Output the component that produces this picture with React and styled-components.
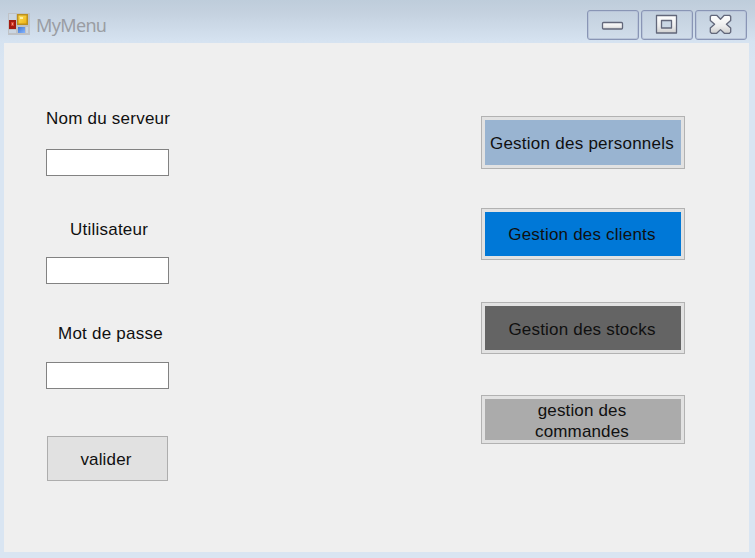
import React from "react";
import styled, { createGlobalStyle } from "styled-components";

const GlobalStyle = createGlobalStyle`
  * { box-sizing: border-box; }
  body { margin: 0; overflow: hidden; }
`;

const Window = styled.div`
  display: flex;
  flex-direction: column;
  width: 755px;
  height: 558px;
  padding: 0 6px 6px 4px;
  background: linear-gradient(#becddb 0, #c4d1df 12px, #d6e3f1 42px, #d9e5f2 60px);
  font-family: "Liberation Sans", Arial, sans-serif;
  color: #101010;
`;

const TitleBar = styled.header`
  display: flex;
  height: 43px;
  padding: 10px 2px 0 4px;
`;

const AppIcon = styled.svg`
  width: 22px;
  height: 22px;
  margin-top: 3px;
`;

const Title = styled.h1`
  flex: 1;
  margin: 3px 0 0 6px;
  font: 400 18px/25px "Noto Sans", "Open Sans", sans-serif;
  letter-spacing: -0.65px;
  color: #9a9da3;
`;

const Controls = styled.div`
  display: flex;
  gap: 2px;
`;

const ControlButton = styled.button`
  width: 52px;
  height: 30px;
  padding: 0;
  border: 1px solid #8995b5;
  border-radius: 3px;
  background: linear-gradient(#c3d0de, #d1ddea);
  box-shadow: inset 0 0 0 1px #b9c5d9;

  svg { display: block; width: 50px; height: 28px; }
`;

const Client = styled.main`
  display: flex;
  justify-content: space-between;
  flex: 1;
  width: 745px;
  padding: 0 64px 0 42px;
  background: #efefef;
`;

const Form = styled.form`
  display: flex;
  flex-direction: column;
  width: 123px;
  padding-top: 64px;
`;

const Field = styled.label`
  display: flex;
  flex-direction: column;
  height: ${(p) => p.$height}px;
`;

const Caption = styled.span`
  height: ${(p) => p.$height}px;
  padding-left: ${(p) => p.$indent}px;
  font-size: 17px;
  line-height: 24px;
  letter-spacing: 0.23px;
  white-space: nowrap;
`;

const TextInput = styled.input`
  width: 123px;
  height: 27px;
  padding: 2px 4px;
  border: 1px solid #828282;
  border-radius: 0;
  background: #fff;
  font: inherit;
  outline: none;
`;

const SubmitButton = styled.button`
  width: 121px;
  height: 45px;
  margin: 0 1px;
  padding: 2px 3px 0 0;
  border: 1px solid #adadad;
  background: #e1e1e1;
  color: inherit;
  font: 17px/21px "Liberation Sans", Arial, sans-serif;
  letter-spacing: 0.15px;
`;

const Menu = styled.nav`
  display: flex;
  flex-direction: column;
  width: 204px;
  padding-top: 73px;
`;

const MenuButton = styled.button`
  flex: none;
  height: ${(p) => p.$height}px;
  margin-bottom: ${(p) => p.$gap}px;
  padding: 0 2px 0 0;
  border: 1px solid #b2b2b2;
  background: ${(p) => p.$color} padding-box;
  box-shadow: inset 0 0 0 3px #e2e2e2;
  color: inherit;
  font: 17px/21px "Liberation Sans", Arial, sans-serif;
  letter-spacing: ${(p) => p.$tracking}px;
`;

const MenuText = styled.span`
  display: flex;
  justify-content: center;
  text-align: center;
  padding-top: ${(p) => p.$drop}px;
  white-space: pre;
`;

const fields = [
  { name: "server", label: "Nom du serveur", height: 111, caption: 42, indent: 0 },
  { name: "user", label: "Utilisateur", height: 104, caption: 39, indent: 24 },
  { name: "password", label: "Mot de passe", height: 114, caption: 40, indent: 12 },
];

const menu = [
  { label: "Gestion des personnels", color: "#99b4d1", height: 53, gap: 39, tracking: 0.25, drop: 1 },
  { label: "Gestion des clients", color: "#0078d7", height: 52, gap: 42, tracking: 0.2, drop: 0 },
  { label: "Gestion des stocks", color: "#646464", height: 52, gap: 41, tracking: 0.2, drop: 2 },
  { label: "gestion des\ncommandes", color: "#ababab", height: 49, gap: 0, tracking: 0.15, drop: 2 },
];

function FormIcon() {
  return (
    <AppIcon viewBox="0 0 22 22">
      <defs>
        <linearGradient id="gold" x2="1" y2="1">
          <stop stopColor="#ffe45f" /><stop offset="1" stopColor="#edae0c" />
        </linearGradient>
        <linearGradient id="blue" x2="1" y2="1">
          <stop stopColor="#4276cf" /><stop offset="1" stopColor="#83b4ff" />
        </linearGradient>
      </defs>
      <path fill="#bfc2c6" d="M0 0h22v22H0z" />
      <path fill="#cbd6e2" d="M1 1h7v6H1zM1 17h7v3H1zM18 14h2v6h-2z" />
      <path fill="#a31b10" d="M1 7h7v9H1z" />
      <path fill="#d94331" d="M3 9h3v4H3z" />
      <path fill="#ee9a87" d="M4 10h1v2H4z" />
      <path fill="url(#gold)" stroke="#bd901c" strokeWidth="1.5" d="M9.75 1.75h9.5v9.5h-9.5z" />
      <path fill="#fff0a1" d="M12 4h3v2h-3z" />
      <path fill="url(#blue)" d="M10 14h7v6h-7z" />
    </AppIcon>
  );
}

function ControlIcon({ kind }) {
  const metal = `url(#metal-${kind})`;
  return (
    <svg viewBox="0 0 50 28" stroke="#62677a" strokeWidth="1.3" strokeLinejoin="round">
      <defs>
        <linearGradient id={`metal-${kind}`} x2="0" y2="1">
          <stop stopColor="#fff" /><stop offset="0.6" stopColor="#ededed" /><stop offset="1" stopColor="#cecece" />
        </linearGradient>
      </defs>
      {kind === "minimize" && <rect x="14.5" y="11.5" width="20" height="6.5" rx="1" fill={metal} />}
      {kind === "maximize" && (
        <path fill={metal} fillRule="evenodd" d="M14.5 4.5h20v17.5h-20zM19.5 9.5v7.5h10v-7.5z" />
      )}
      {kind === "close" && (
        <path
          fill={metal}
          d="M15.5 4.3h5.2l3.8 3.9 3.8-3.9h5.2l1.2 1.2v4l-4.3 3.8 4.3 3.8v4l-1.2 1.2h-5.2l-3.8-3.7-3.8 3.7h-5.2l-1.2-1.2v-4l4.3-3.8-4.3-3.8v-4z"
        />
      )}
    </svg>
  );
}

export default function App() {
  return (
    <>
      <GlobalStyle />
      <Window>
        <TitleBar>
          <FormIcon />
          <Title>MyMenu</Title>
          <Controls>
            {["minimize", "maximize", "close"].map((kind) => (
              <ControlButton key={kind} type="button" aria-label={kind}>
                <ControlIcon kind={kind} />
              </ControlButton>
            ))}
          </Controls>
        </TitleBar>
        <Client>
          <Form onSubmit={(e) => e.preventDefault()}>
            {fields.map((f) => (
              <Field key={f.name} $height={f.height}>
                <Caption $height={f.caption} $indent={f.indent}>{f.label}</Caption>
                <TextInput name={f.name} type={f.name === "password" ? "password" : "text"} />
              </Field>
            ))}
            <SubmitButton>valider</SubmitButton>
          </Form>
          <Menu>
            {menu.map((m) => (
              <MenuButton key={m.label} type="button" $color={m.color} $height={m.height} $gap={m.gap} $tracking={m.tracking}>
                <MenuText $drop={m.drop}>{m.label}</MenuText>
              </MenuButton>
            ))}
          </Menu>
        </Client>
      </Window>
    </>
  );
}
